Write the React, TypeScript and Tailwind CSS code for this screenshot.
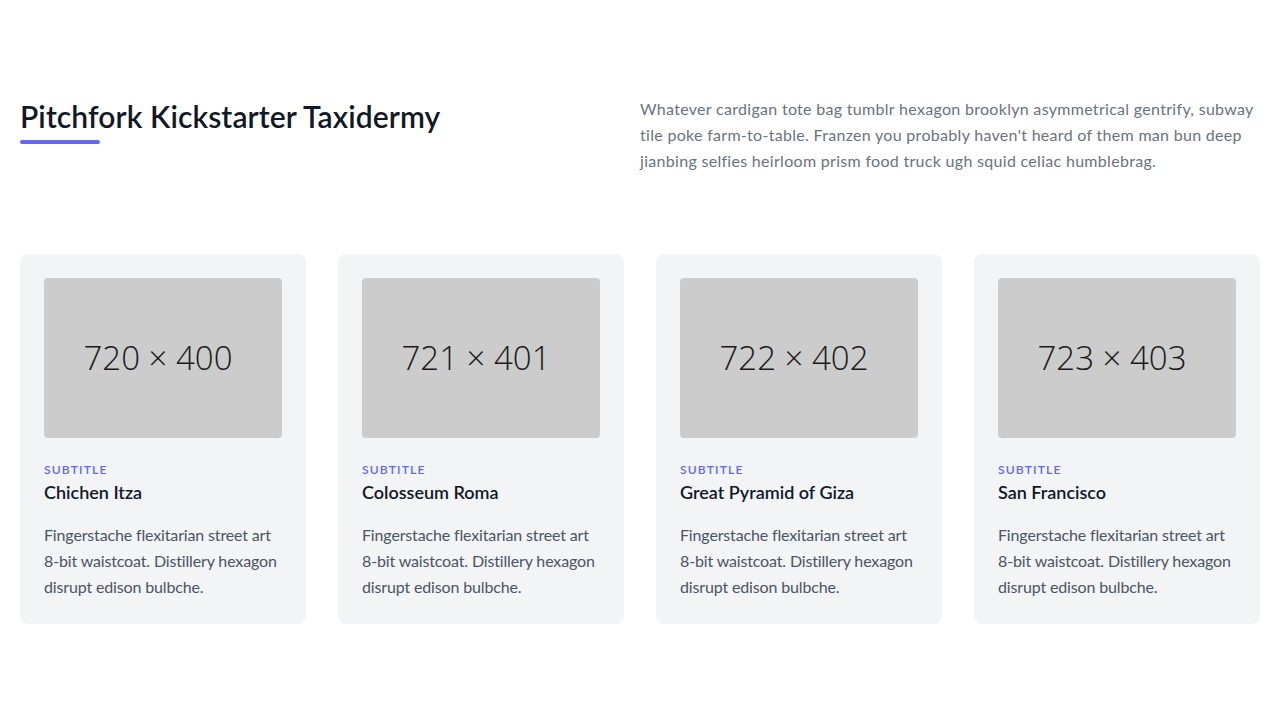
const cards = [
  { size: '720 × 400', title: 'Chichen Itza' },
  { size: '721 × 401', title: 'Colosseum Roma' },
  { size: '722 × 402', title: 'Great Pyramid of Giza' },
  { size: '723 × 403', title: 'San Francisco' },
];

export default function App() {
  return (
    <section className="text-[#4b5563] bg-white min-h-screen font-['Lato',sans-serif]">
      <div className="max-w-[1280px] px-5 py-24 mx-auto">
        {/* Header */}
        <div className="flex flex-wrap w-full mb-20">
          <div className="w-1/2">
            <h1 className="text-3xl leading-[40px] font-semibold mb-1 text-[#111827] tracking-[0.1px]">Pitchfork Kickstarter Taxidermy</h1>
            <div className="h-1 w-20 bg-[#6366f1] rounded" />
          </div>
          <p className="w-1/2 leading-relaxed text-[#6b7280] tracking-[0.3px]">
            Whatever cardigan tote bag tumblr hexagon brooklyn asymmetrical gentrify, subway tile poke farm-to-table. Franzen you probably haven't heard of them man bun deep jianbing selfies heirloom prism food truck ugh squid celiac humblebrag.
          </p>
        </div>

        {/* Cards */}
        <div className="flex flex-wrap -m-4">
          {cards.map((c) => (
            <div key={c.title} className="w-1/4 p-4">
              <div className="bg-[#f3f4f6] p-6 rounded-lg">
                <div className="h-40 w-full rounded bg-[#cccccc] mb-6 flex items-center justify-center pr-[10px]">
                  <span className="text-[33px] font-light text-[#1a1a1a] font-['Open_Sans',sans-serif]">{c.size}</span>
                </div>
                <h3 className="tracking-widest text-[#6366f1] text-xs font-semibold">SUBTITLE</h3>
                <h2 className="text-lg text-[#111827] font-semibold mb-4">{c.title}</h2>
                <p className="leading-relaxed text-base tracking-[-0.15px]">
                  Fingerstache flexitarian street art 8-bit waistcoat. Distillery hexagon disrupt edison bulbche.
                </p>
              </div>
            </div>
          ))}
        </div>
      </div>
    </section>
  );
}
